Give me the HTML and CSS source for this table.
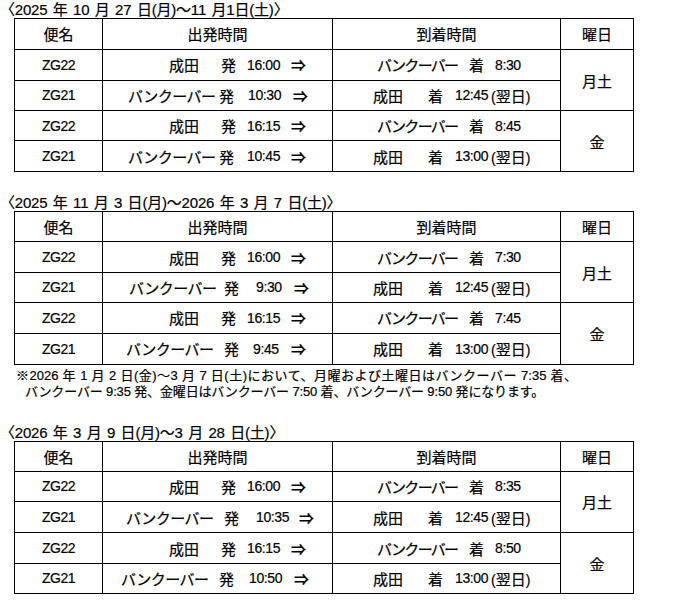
FILE: index.html
```html
<!DOCTYPE html>
<html lang="ja">
<head>
<meta charset="utf-8">
<title>時刻表</title>
<link rel="stylesheet" href="styles.css">
</head>
<body>
<div class="page">
  <section class="period p1">
    <div class="title">〈2025 年 10 月 27 日(月)〜11 月1日(土)〉</div>
    <table class="tt">
      <colgroup><col class="c1"><col class="c2"><col class="c3"><col class="c4"></colgroup>
      <tr><th>便名</th><th>出発時間</th><th>到着時間</th><th>曜日</th></tr>
      <tr>
        <td class="fl">ZG22</td>
        <td><div class="dg dn"><span>成田</span><span>発</span><span class="tm">16:00</span><span class="ar">⇒</span></div></td>
        <td><div class="ag av"><span class="kv">バンクーバー</span><span>着</span><span class="tm">8:30</span></div></td>
        <td class="day" rowspan="2">月土</td>
      </tr>
      <tr>
        <td class="fl">ZG21</td>
        <td><div class="dg dv1"><span class="kd">バンクーバー</span><span>発</span><span class="tm">10:30</span><span class="ar">⇒</span></div></td>
        <td><div class="ag an"><span>成田</span><span>着</span><span class="tm">12:45</span><span class="nx">(<span class="jp">翌日</span>)</span></div></td>
      </tr>
      <tr class="r30">
        <td class="fl">ZG22</td>
        <td><div class="dg dn"><span>成田</span><span>発</span><span class="tm">16:15</span><span class="ar">⇒</span></div></td>
        <td><div class="ag av"><span class="kv">バンクーバー</span><span>着</span><span class="tm">8:45</span></div></td>
        <td class="day" rowspan="2">金</td>
      </tr>
      <tr>
        <td class="fl">ZG21</td>
        <td><div class="dg dv2"><span class="kd">バンクーバー</span><span>発</span><span class="tm">10:45</span><span class="ar">⇒</span></div></td>
        <td><div class="ag an"><span>成田</span><span>着</span><span class="tm">13:00</span><span class="nx">(<span class="jp">翌日</span>)</span></div></td>
      </tr>
    </table>
  </section>

  <section class="period p2">
    <div class="title">〈2025 年 11 月 3 日(月)〜2026 年 3 月 7 日(土)〉</div>
    <table class="tt">
      <colgroup><col class="c1"><col class="c2"><col class="c3"><col class="c4"></colgroup>
      <tr class="r30"><th>便名</th><th>出発時間</th><th>到着時間</th><th>曜日</th></tr>
      <tr>
        <td class="fl">ZG22</td>
        <td><div class="dg dn"><span>成田</span><span>発</span><span class="tm">16:00</span><span class="ar">⇒</span></div></td>
        <td><div class="ag av"><span class="kv">バンクーバー</span><span>着</span><span class="tm">7:30</span></div></td>
        <td class="day" rowspan="2">月土</td>
      </tr>
      <tr class="r30">
        <td class="fl">ZG21</td>
        <td><div class="dg dv3"><span class="kd">バンクーバー</span><span>発</span><span class="tm">9:30</span><span class="ar">⇒</span></div></td>
        <td><div class="ag an"><span>成田</span><span>着</span><span class="tm">12:45</span><span class="nx">(<span class="jp">翌日</span>)</span></div></td>
      </tr>
      <tr>
        <td class="fl">ZG22</td>
        <td><div class="dg dn"><span>成田</span><span>発</span><span class="tm">16:15</span><span class="ar">⇒</span></div></td>
        <td><div class="ag av"><span class="kv">バンクーバー</span><span>着</span><span class="tm">7:45</span></div></td>
        <td class="day" rowspan="2">金</td>
      </tr>
      <tr>
        <td class="fl">ZG21</td>
        <td><div class="dg dv4"><span class="kd">バンクーバー</span><span>発</span><span class="tm">9:45</span><span class="ar">⇒</span></div></td>
        <td><div class="ag an"><span>成田</span><span>着</span><span class="tm">13:00</span><span class="nx">(<span class="jp">翌日</span>)</span></div></td>
      </tr>
    </table>
    <div class="note">
      <div class="note-l1">※2026 年 1 月 2 日(金)〜3 月 7 日(土)において、月曜および土曜日はバンクーバー 7:35 着、</div>
      <div class="note-l2">バンクーバー 9:35 発、金曜日はバンクーバー 7:50 着、バンクーバー 9:50 発になります。</div>
    </div>
  </section>

  <section class="period p3">
    <div class="title">〈2026 年 3 月 9 日(月)〜3 月 28 日(土)〉</div>
    <table class="tt">
      <colgroup><col class="c1"><col class="c2"><col class="c3"><col class="c4"></colgroup>
      <tr class="r30"><th>便名</th><th>出発時間</th><th>到着時間</th><th>曜日</th></tr>
      <tr>
        <td class="fl">ZG22</td>
        <td><div class="dg dn"><span>成田</span><span>発</span><span class="tm">16:00</span><span class="ar">⇒</span></div></td>
        <td><div class="ag av"><span class="kv">バンクーバー</span><span>着</span><span class="tm">8:35</span></div></td>
        <td class="day" rowspan="2">月土</td>
      </tr>
      <tr>
        <td class="fl">ZG21</td>
        <td><div class="dg dv5"><span class="kd">バンクーバー</span><span>発</span><span class="tm">10:35</span><span class="ar">⇒</span></div></td>
        <td><div class="ag an"><span>成田</span><span>着</span><span class="tm">12:45</span><span class="nx">(<span class="jp">翌日</span>)</span></div></td>
      </tr>
      <tr>
        <td class="fl">ZG22</td>
        <td><div class="dg dn"><span>成田</span><span>発</span><span class="tm">16:15</span><span class="ar">⇒</span></div></td>
        <td><div class="ag av"><span class="kv">バンクーバー</span><span>着</span><span class="tm">8:50</span></div></td>
        <td class="day" rowspan="2">金</td>
      </tr>
      <tr class="r30">
        <td class="fl">ZG21</td>
        <td><div class="dg dv6"><span class="kd">バンクーバー</span><span>発</span><span class="tm">10:50</span><span class="ar">⇒</span></div></td>
        <td><div class="ag an"><span>成田</span><span>着</span><span class="tm">13:00</span><span class="nx">(<span class="jp">翌日</span>)</span></div></td>
      </tr>
    </table>
  </section>
</div>
</body>
</html>
```

FILE: styles.css
```css
html, body {
  margin: 0;
  padding: 0;
  background: #ffffff;
}

body {
  font-family: "Liberation Sans", "Noto Sans CJK JP", sans-serif;
  font-size: 15px;
  font-weight: 400;
  color: #000000;
  -webkit-text-stroke: 0.2px #000000;
}

.period {
  display: flex;
  flex-direction: column;
}

.p2 {
  margin-top: 21px;
}

.p3 {
  margin-top: 23px;
}

.title {
  height: 16px;
  padding-top: 2px;
  line-height: 16px;
  white-space: nowrap;
  letter-spacing: -0.2px;
  word-spacing: 1.5px;
}

.tt {
  margin-left: 14px;
  border-collapse: collapse;
  table-layout: fixed;
  width: 619px;
}

.c1 { width: 88px; }
.c2 { width: 230px; }
.c3 { width: 228px; }
.c4 { width: 73px; }

.tt th,
.tt td {
  border: 1px solid #000000;
  height: 29.8px;
  padding: 0;
  font-weight: 400;
  text-align: center;
  vertical-align: middle;
  white-space: nowrap;
}

.tt .r30 th,
.tt .r30 td {
  height: 29px;
}

.fl {
  font-size: 14px;
  letter-spacing: -0.5px;
}

.tm {
  font-size: 14px;
  letter-spacing: -0.4px;
}

.nx {
  font-size: 14px;
}

.jp {
  font-size: 15px;
}

.kd {
  letter-spacing: -0.5px;
}

.kv {
  letter-spacing: -1.7px;
}

.ar {
  font-weight: 700;
}

.dg,
.ag {
  display: grid;
  align-items: center;
  text-align: left;
}

.dn  { padding-left: 66px; grid-template-columns: 52px 26px 44px auto; }
.dv1 { padding-left: 25px; grid-template-columns: 91px 29px 45px auto; }
.dv2 { padding-left: 25px; grid-template-columns: 91px 28px 44px auto; }
.dv3 { padding-left: 26px; grid-template-columns: 95px 32px 38px auto; }
.dv4 { padding-left: 23px; grid-template-columns: 98px 29px 38px auto; }
.dv5 { padding-left: 23px; grid-template-columns: 98px 32px 43px auto; }
.dv6 { padding-left: 18px; grid-template-columns: 98px 30px 45px auto; }

.av { padding-left: 44px; grid-template-columns: 92px 26px auto; }
.an { padding-left: 40px; grid-template-columns: 55px 27px 36px auto; }

.note {
  margin-top: 3px;
  font-size: 13px;
  line-height: 16px;
  white-space: nowrap;
}

.note-l1 {
  margin-left: 16px;
  width: 561px;
  text-align: justify;
  text-align-last: justify;
}

.note-l2 {
  margin-left: 25px;
  letter-spacing: -0.15px;
}
```
